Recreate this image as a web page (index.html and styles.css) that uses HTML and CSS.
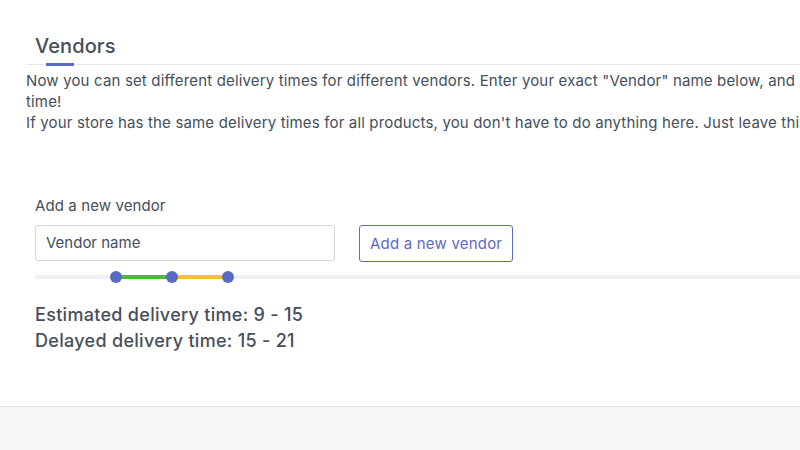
FILE: index.html
```html
<!DOCTYPE html>
<html>
<head>
<meta charset="utf-8">
<link rel="stylesheet" href="styles.css">
</head>
<body>
<div class="page">
  <main class="section">
    <div class="tabs">
      <div class="tab">Vendors</div>
    </div>
    <p class="desc">Now you can set different delivery times for different vendors. Enter your exact "Vendor" name below, and set the delivery<br>time!<br>If your store has the same delivery times for all products, you don't have to do anything here. Just leave this empty.</p>
    <div class="form">
      <label class="label" for="vendor">Add a new vendor</label>
      <div class="row">
        <input id="vendor" class="input" type="text" placeholder="Vendor name">
        <button class="btn">Add a new vendor</button>
      </div>
      <div class="slider">
        <div class="track"></div>
        <div class="seg green"></div>
        <div class="seg yellow"></div>
        <div class="thumb t1"></div>
        <div class="thumb t2"></div>
        <div class="thumb t3"></div>
      </div>
      <div class="times">
        <div>Estimated delivery time: 9 - 15</div>
        <div>Delayed delivery time: 15 - 21</div>
      </div>
    </div>
  </main>
  <footer class="footer"></footer>
</div>
</body>
</html>
```
FILE: styles.css
```css
html, body {
  margin: 0;
  padding: 0;
  background: #fff;
  overflow: hidden;
}
body {
  font-family: Inter, "Noto Sans", sans-serif;
  color: #454f5b;
  -webkit-font-smoothing: antialiased;
}
.page {
  width: 800px;
  height: 450px;
  display: flex;
  flex-direction: column;
}
.section {
  flex: 1;
  padding: 30px 0 0 26px;
  overflow: hidden;
}
.tabs {
  display: flex;
  border-bottom: 1px solid #e6e7eb;
}
.tab {
  position: relative;
  padding: 5px 9px 6px;
  font-size: 20px;
  font-weight: 500;
  line-height: 23px;
  letter-spacing: 0.1px;
  color: #454f5b;
}
.tab::after {
  content: "";
  position: absolute;
  left: 20px;
  width: 28px;
  bottom: -2px;
  height: 3px;
  background: #5c6ac4;
}
.desc {
  margin: 5px 0 0;
  font-size: 15px;
  line-height: 21px;
  letter-spacing: 0.16px;
  white-space: nowrap;
  color: #454f5b;
}
.form {
  padding: 63px 0 0 9px;
}
.label {
  display: block;
  font-size: 15px;
  line-height: 20px;
  letter-spacing: 0.1px;
  color: #454f5b;
}
.row {
  display: flex;
  align-items: center;
  gap: 24px;
  margin-top: 7px;
}
.input {
  box-sizing: border-box;
  width: 300px;
  height: 36px;
  border: 1px solid #d6d8de;
  border-radius: 3px;
  padding: 0 10px;
  font-family: inherit;
  font-size: 15px;
  color: #454f5b;
  outline: none;
}
.input::placeholder {
  color: #454f5b;
  opacity: 1;
}
.btn {
  box-sizing: border-box;
  height: 37px;
  padding: 0 10px;
  margin-top: 2px;
  background: #fff;
  border: 1px solid #5c6ac4;
  border-radius: 3px;
  color: #5c6ac4;
  font-family: inherit;
  font-size: 15px;
  letter-spacing: 0.2px;
}
.slider {
  position: relative;
  height: 12px;
  margin-top: 9px;
}
.track {
  position: absolute;
  left: 0;
  right: 0;
  top: 4px;
  height: 4px;
  background: #eef0f3;
}
.seg {
  position: absolute;
  top: 4px;
  height: 4px;
}
.green { left: 81px; width: 56px; background: #50b83c; }
.yellow { left: 137px; width: 56px; background: #f4bd41; }
.thumb {
  position: absolute;
  top: 0;
  width: 12px;
  height: 12px;
  margin-left: -6px;
  border-radius: 50%;
  background: #5c6ac4;
}
.t1 { left: 81px; }
.t2 { left: 137px; }
.t3 { left: 193px; }
.times {
  margin-top: 19px;
  font-size: 18px;
  font-weight: 500;
  line-height: 26px;
  letter-spacing: 0.3px;
  color: #454f5b;
}
.footer {
  height: 43px;
  background: #f6f7f9;
  border-top: 1px solid #e3e5e8;
}
```
